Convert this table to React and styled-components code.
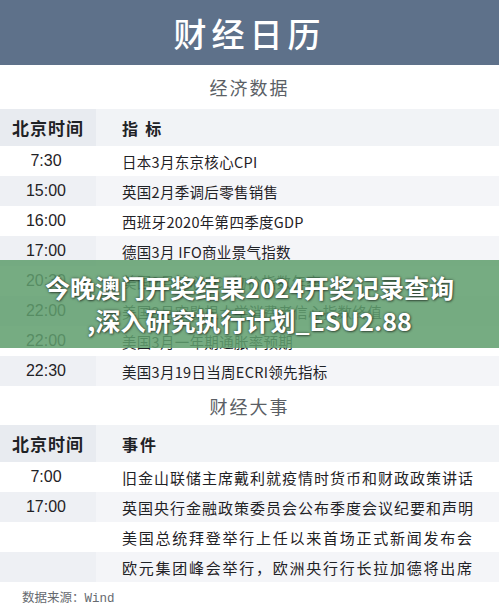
import React from "react";
import styled, { createGlobalStyle } from "styled-components";

const Global = createGlobalStyle`
  body {
    margin: 0;
    background: #ffffff;
    font-family: "Liberation Sans", "Noto Sans CJK SC", sans-serif;
  }
`;

const Page = styled.div`
  position: relative;
  width: 499px;
  height: 611px;
  overflow: hidden;
  background: #ffffff;
`;

const Banner = styled.div`
  height: 65px;
  display: flex;
  align-items: center;
  justify-content: center;
  background: #5e718a;
  color: #ffffff;
  font-family: "Noto Sans CJK SC", sans-serif;
  font-size: 33px;
  font-weight: 500;
  letter-spacing: 5px;
`;

const SectionTitle = styled.div`
  height: ${(p) => p.h}px;
  display: flex;
  align-items: center;
  justify-content: center;
  color: #5b5f66;
  font-family: "Noto Sans CJK SC", sans-serif;
  font-size: 18px;
  letter-spacing: 2px;
`;

const Table = styled.div`
  display: grid;
  grid-template-columns: 96px 1fr;
`;

const TimeCell = styled.div`
  height: ${(p) => (p.head ? 37 : 30)}px;
  display: flex;
  align-items: center;
  justify-content: center;
  background: ${(p) => (p.head ? "#e8ebf0" : p.shade ? "#eef0f4" : "#ffffff")};
  color: #1f2226;
  font-family: ${(p) =>
    p.head ? '"Noto Sans CJK SC", sans-serif' : '"Liberation Sans", sans-serif'};
  font-size: ${(p) => (p.head ? 17 : 16)}px;
  font-weight: ${(p) => (p.head ? 700 : 400)};
  letter-spacing: ${(p) => (p.head ? 1 : 0)}px;
  padding-right: ${(p) => (p.head ? 0 : 4)}px;
`;

const TextCell = styled.div`
  height: ${(p) => (p.head ? 37 : 30)}px;
  display: flex;
  align-items: center;
  padding-left: 26px;
  background: ${(p) => (p.head ? "#f1f3f6" : p.shade ? "#f4f5f8" : "#ffffff")};
  color: #1f2226;
  font-family: "Noto Sans CJK SC", sans-serif;
  font-size: ${(p) => p.size ?? (p.head ? 16 : 14.5)}px;
  font-weight: ${(p) => (p.head ? 700 : 400)};
  letter-spacing: ${(p) => p.spread ?? 0.3}px;
  white-space: nowrap;
`;

const Source = styled.div`
  padding: 5px 0 0 22px;
  color: #666a70;
  font-family: "Noto Sans CJK SC", sans-serif;
  font-size: 12.5px;
`;

const Mono = styled.span`
  font-family: "Liberation Mono", monospace;
`;

const Overlay = styled.div`
  position: absolute;
  left: 0;
  right: 0;
  top: 260px;
  height: 88px;
  display: flex;
  flex-direction: column;
  align-items: center;
  justify-content: center;
  background: rgba(96, 158, 110, 0.86);
  color: #ffffff;
  font-family: "Noto Sans CJK SC", sans-serif;
  font-size: 25px;
  font-weight: 700;
  line-height: 33px;
  text-shadow: 0 0 3px rgba(0, 0, 0, 0.55), 1px 1px 2px rgba(0, 0, 0, 0.4);
`;

const econ = [
  ["7:30", "日本3月东京核心CPI"],
  ["15:00", "英国2月季调后零售销售"],
  ["16:00", "西班牙2020年第四季度GDP"],
  ["17:00", "德国3月 IFO商业景气指数"],
  ["20:30", "美国2月核心PCE物价指数年率"],
  ["22:00", "美国3月密歇根大学消费者信心指数终值"],
  ["22:00", "美国3月一年期通胀率预期"],
  ["22:30", "美国3月19日当周ECRI领先指标"],
];

const events = [
  ["7:00", "旧金山联储主席戴利就疫情时货币和财政政策讲话", 1],
  ["17:00", "英国央行金融政策委员会公布季度会议纪要和声明", 1],
  ["", "美国总统拜登举行上任以来首场正式新闻发布会", 1.75],
  ["", "欧元集团峰会举行，欧洲央行行长拉加德将出席", 1.75],
];

export default function App() {
  return (
    <Page>
      <Global />
      <Banner>财经日历</Banner>
      <SectionTitle h={44}>经济数据</SectionTitle>
      <Table>
        <TimeCell head>北京时间</TimeCell>
        <TextCell head spread={0}>指&nbsp;&nbsp;标</TextCell>
        {econ.map(([t, s], i) => (
          <React.Fragment key={i}>
            <TimeCell shade={i % 2 === 1}>{t}</TimeCell>
            <TextCell shade={i % 2 === 1}>{s}</TextCell>
          </React.Fragment>
        ))}
      </Table>
      <SectionTitle h={39}>财经大事</SectionTitle>
      <Table>
        <TimeCell head>北京时间</TimeCell>
        <TextCell head spread={2}>事件</TextCell>
        {events.map(([t, s, sp], i) => (
          <React.Fragment key={i}>
            <TimeCell shade={i % 2 === 1}>{t}</TimeCell>
            <TextCell shade={i % 2 === 1} spread={sp} size={15}>
              {s}
            </TextCell>
          </React.Fragment>
        ))}
      </Table>
      <Source>
        数据来源：<Mono>Wind</Mono>
      </Source>
      <Overlay>
        <div>今晚澳门开奖结果2024开奖记录查询</div>
        <div>,深入研究执行计划_ESU2.88</div>
      </Overlay>
    </Page>
  );
}
